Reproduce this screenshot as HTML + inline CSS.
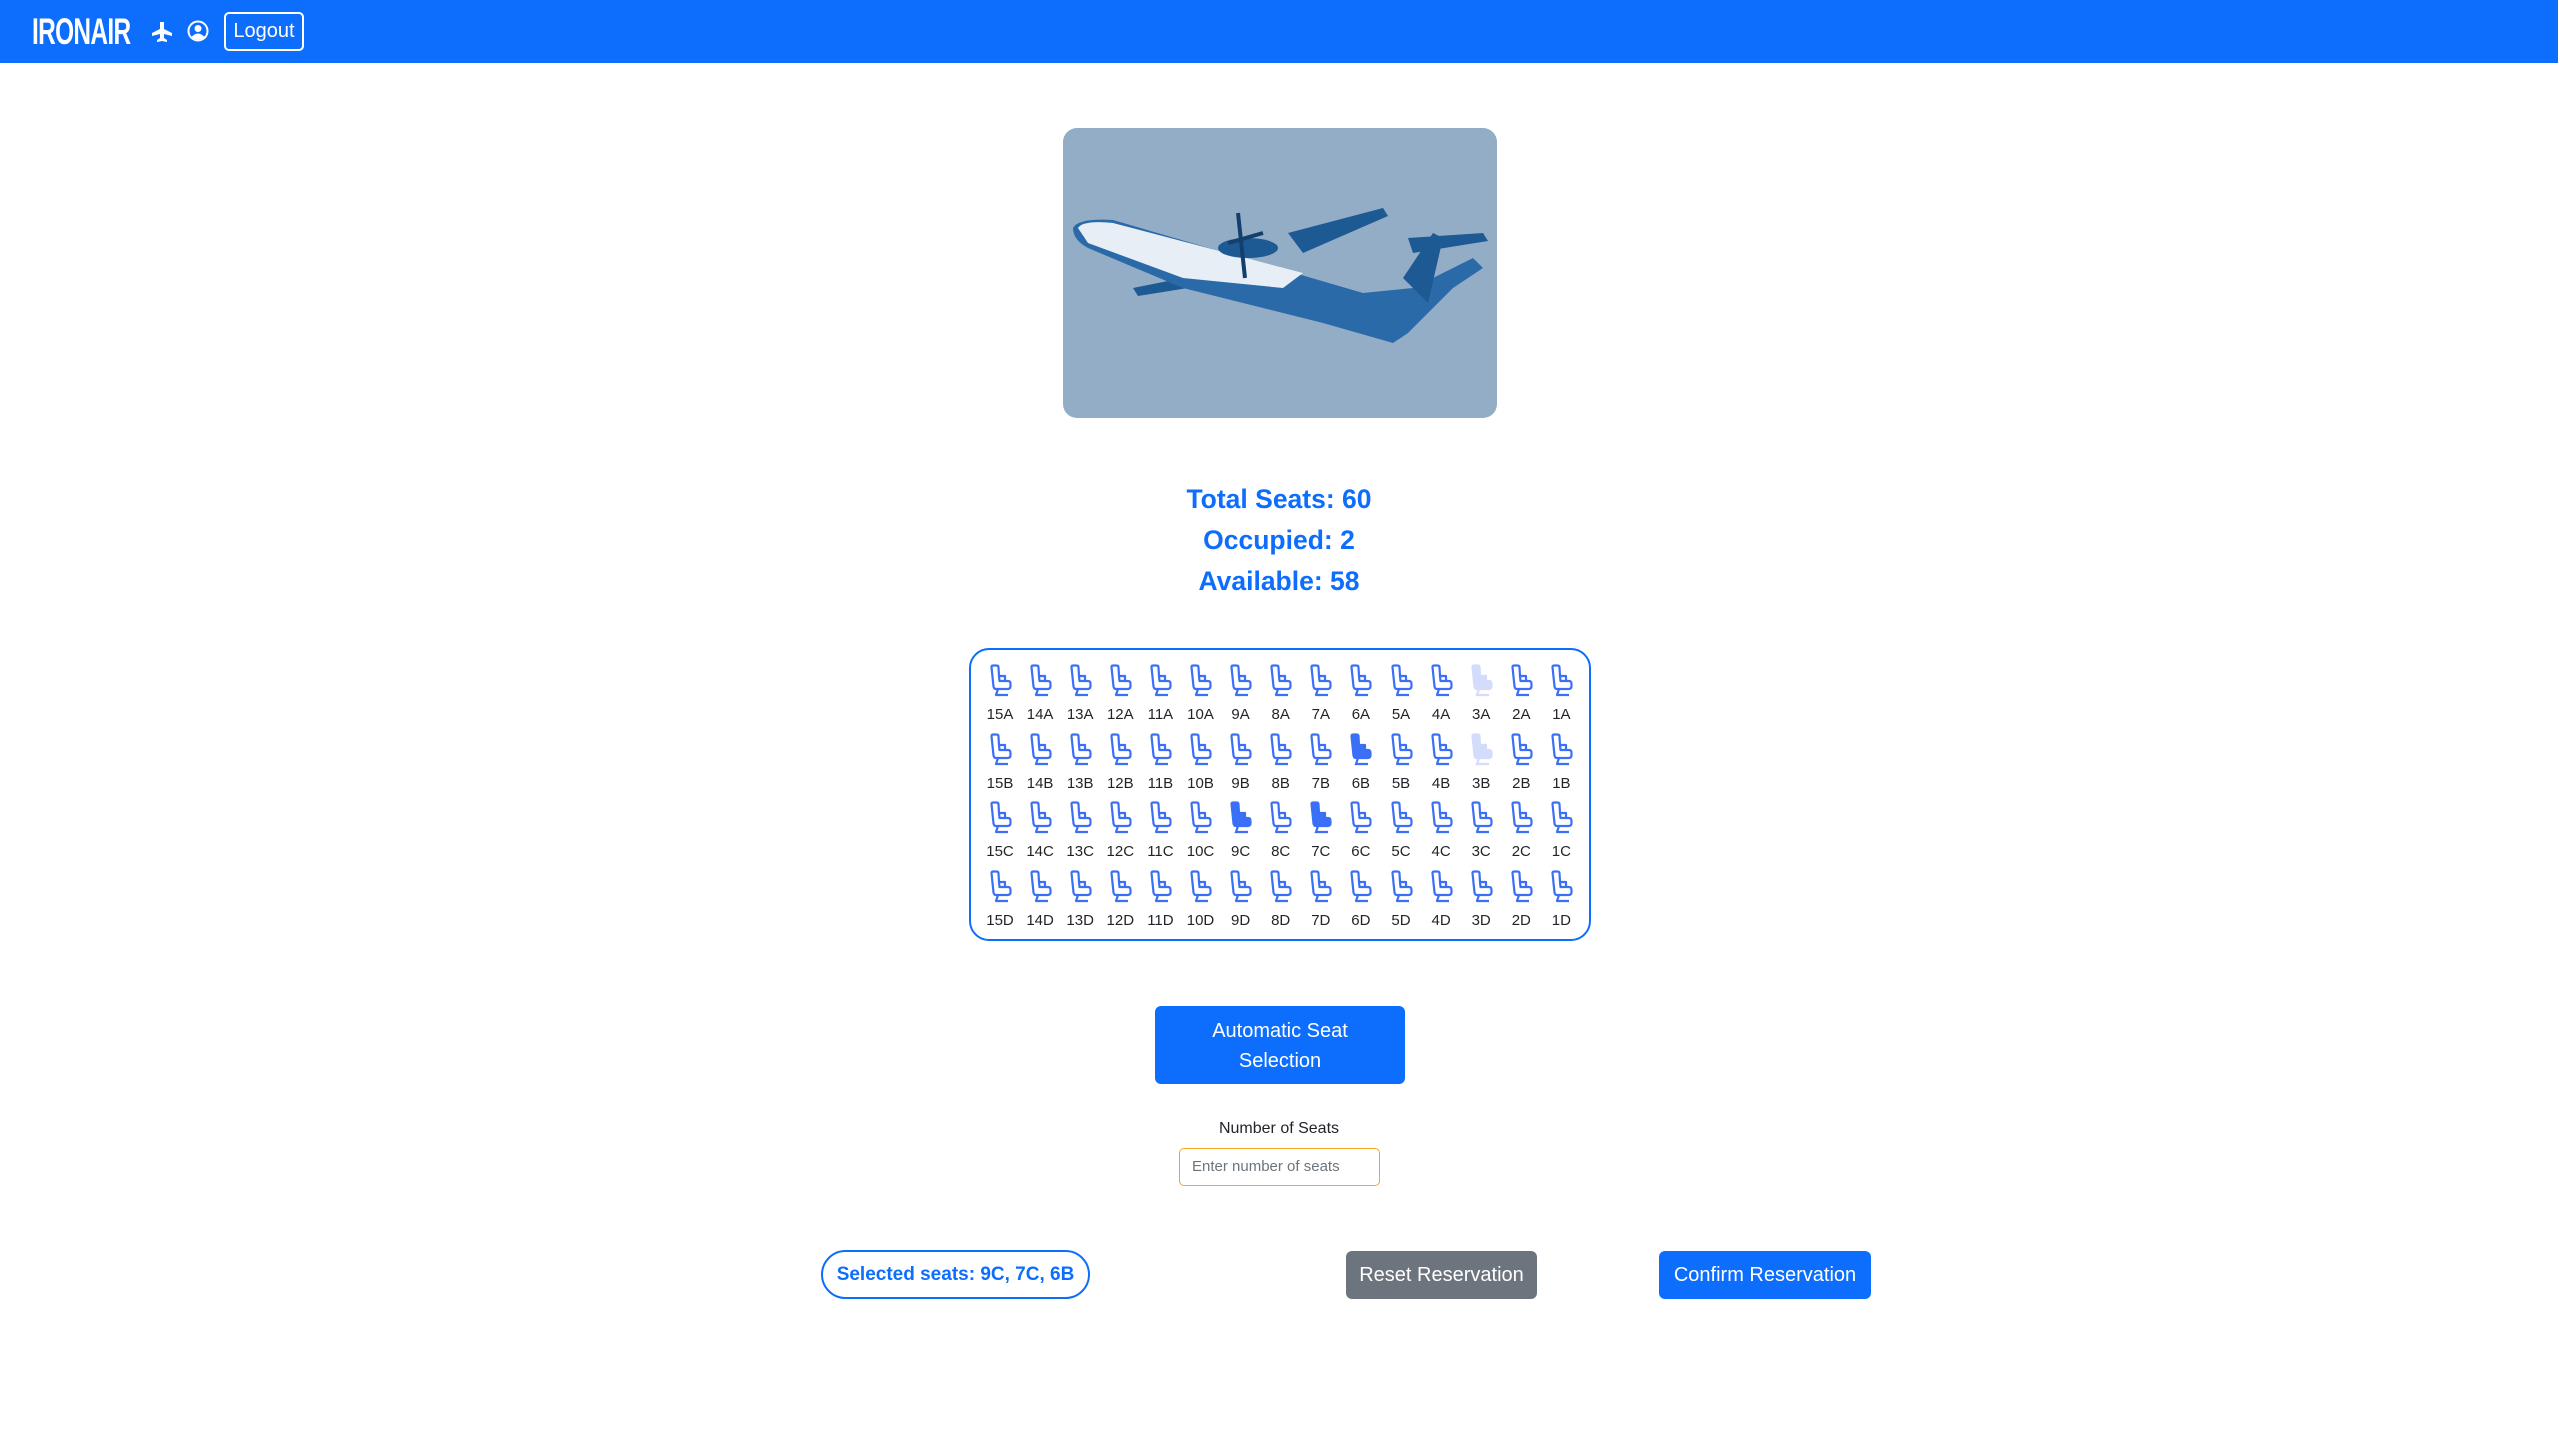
<!DOCTYPE html>
<html><head><meta charset="utf-8"><style>
*{box-sizing:border-box;margin:0;padding:0}
body{width:2558px;height:1440px;background:#fff;font-family:"Liberation Sans",sans-serif;position:relative;overflow:hidden}
.nav{position:absolute;left:0;top:0;width:2558px;height:63px;background:#0d6efd}
.brand{position:absolute;left:32px;top:12px;font-family:"Liberation Sans Narrow","Liberation Sans",sans-serif;font-weight:bold;font-size:37px;color:#fff;letter-spacing:-1px;transform:scaleX(0.66);transform-origin:left;line-height:40px;white-space:nowrap}
.logout{position:absolute;left:224px;top:12px;width:80px;height:39px;border:2px solid #fff;border-radius:5px;color:#fff;font-size:20px;text-align:center;line-height:35px}
.abs{position:absolute}
.stat{position:absolute;left:0;width:2558px;text-align:center;color:#0d6efd;font-size:26.5px;font-weight:bold}
.grid{position:absolute;left:969px;top:648px;width:622px;height:293px;border:2px solid #0d6efd;border-radius:20px}
.seat{position:absolute;width:40px;text-align:center;font-size:15px;color:#212529}
.seat svg{display:block;margin:0 auto}
.btn{position:absolute;border-radius:6px;color:#fff;font-size:20px;text-align:center}
</style></head><body>
<div class="nav">
<div class="brand">IRONAIR</div>
<svg class="abs" style="left:151px;top:21px" width="22" height="22" viewBox="0 0 22 22"><path fill="#fff" d="M9 1h4l0 7 8 4v3l-8-2v4l3 2v2l-5-1-5 1v-2l3-2v-4l-8 2v-3l8-4z"/></svg>
<svg class="abs" style="left:187px;top:20px" width="22" height="22" viewBox="0 0 22 22"><circle cx="11" cy="11" r="9.5" fill="none" stroke="#fff" stroke-width="2"/><circle cx="11" cy="8.5" r="3.5" fill="#fff"/><path d="M4.5 17Q11 10 17.5 17Q11 22 4.5 17z" fill="#fff"/></svg>
<div class="logout">Logout</div>
</div>

<svg class="abs" style="left:1063px;top:128px" width="434" height="290" viewBox="0 0 434 290">
<defs><clipPath id="c"><rect width="434" height="290" rx="14"/></clipPath></defs>
<g clip-path="url(#c)">
<rect width="434" height="290" fill="#93adc7"/>
<path d="M225 105L320 80L325 88L240 125Z" fill="#1d5a94"/>
<path d="M70 160L120 150L125 160L75 168Z" fill="#1d5a94"/>
<path d="M10 100Q15 90 50 92L300 165L350 160L410 130L420 140L390 160L345 205L330 215L260 195L120 160L25 120Q10 112 10 100Z" fill="#2a6aa8"/>
<path d="M15 100Q20 92 50 95L240 145L220 160L120 150L25 115Z" fill="#e8eef5"/>
<path d="M340 150L370 105L380 110L365 175Z" fill="#1d5a94"/>
<path d="M345 110L420 105L425 113L350 125Z" fill="#1d5a94"/>
<ellipse cx="185" cy="120" rx="30" ry="10" fill="#1d5a94"/>
<path d="M175 85L182 150M165 115L200 105" stroke="#123f6d" stroke-width="4"/>
</g></svg>

<div class="stat" style="top:484px">Total Seats: 60</div>
<div class="stat" style="top:525px">Occupied: 2</div>
<div class="stat" style="top:566px">Available: 58</div>

<div class="grid"></div>
<div id="seats"></div>

<div class="btn" style="left:1155px;top:1006px;width:250px;height:78px;background:#0d6efd;line-height:30px;padding-top:10px">Automatic Seat<br>Selection</div>
<div class="abs" style="left:0;width:2558px;top:1120px;text-align:center;font-size:16px;color:#212529">Number of Seats</div>
<div class="abs" style="left:1179px;top:1148px;width:201px;height:38px;border:1.5px solid #f5a623;border-radius:5px;font-size:15px;color:#6c757d;line-height:35px;padding-left:12px">Enter number of seats</div>

<div class="abs" style="left:821px;top:1250px;width:269px;height:49px;border:2px solid #0d6efd;border-radius:25px;color:#0d6efd;font-size:19px;font-weight:bold;text-align:center;line-height:45px">Selected seats: 9C, 7C, 6B</div>
<div class="btn" style="left:1346px;top:1251px;width:191px;height:48px;background:#6c757d;line-height:48px">Reset Reservation</div>
<div class="btn" style="left:1659px;top:1251px;width:212px;height:48px;background:#0d6efd;line-height:48px">Confirm Reservation</div>

<script>
var rows=['A','B','C','D'],out='';
var occ={'3A':1,'3B':1},sel={'9C':1,'7C':1,'6B':1};
var P='M2.5 3Q2.5 1.5 4.5 1.5H7.5Q9.5 1.5 9.5 3.5L10 12H16V17H19Q21.5 17 21.5 20V22Q21.5 25 18.5 25H7Q5 25 4.5 22.5Z';
var L='M10 12L10.5 17H16M9 25L7 31H19';
for(var r=0;r<4;r++){for(var i=0;i<15;i++){var n=(15-i)+rows[r];var x=1000+i*40.1-20;var y=664+r*68.5;
var col='#3b6ff5',fill='none';
if(occ[n]){col='#d4dcfb';fill='#d4dcfb';}
if(sel[n]){fill='#3b6ff5';}
out+='<div class="seat" style="left:'+x+'px;top:'+y+'px"><svg width="23" height="34" viewBox="0 0 23 34"><path d="'+P+'" fill="'+fill+'" stroke="'+col+'" stroke-width="2.2" stroke-linejoin="round"/>'+(fill==='none'?'<path d="'+L+'" fill="none" stroke="'+col+'" stroke-width="2.2" stroke-linejoin="round"/>':'<path d="M9 25L7 31H19" fill="none" stroke="'+col+'" stroke-width="2.2"/>')+'</svg><div style="margin-top:8px;line-height:18px">'+n+'</div></div>';}}
document.getElementById('seats').innerHTML=out;
</script>
</body></html>
